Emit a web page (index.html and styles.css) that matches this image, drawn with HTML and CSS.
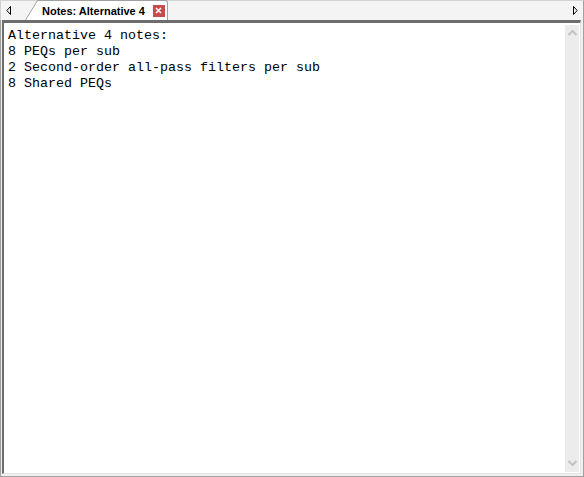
FILE: index.html
```html
<!DOCTYPE html>
<html>
<head>
<meta charset="utf-8">
<link rel="stylesheet" href="styles.css">
</head>
<body>
<div class="window">
  <div class="tabbar">
    <div class="nav nav-left">
      <svg width="6" height="9" viewBox="0 0 6 9"><path d="M4.5 0.5 L0.8 4.5 L4.5 8.5 Z" fill="none" stroke="#000" stroke-width="1"/></svg>
    </div>
    <div class="tab">
      <svg class="tab-slant" width="14" height="20" viewBox="0 0 14 20"><path d="M0 20 L12 1 L14 1 L14 20 Z" fill="#fff"/><path d="M0.5 20 L12.5 0.5 L14 0.5" fill="none" stroke="#a0a0a0" stroke-width="1"/></svg>
      <div class="tab-body">
        <span class="tab-title">Notes: Alternative 4</span>
        <span class="tab-close">
          <svg width="7" height="7" viewBox="0 0 7 7"><path d="M1 1 L6 6 M6 1 L1 6" stroke="#fff" stroke-width="1.6"/></svg>
        </span>
      </div>
    </div>
    <div class="spacer"></div>
    <div class="nav nav-right">
      <svg width="6" height="9" viewBox="0 0 6 9"><path d="M1.5 0.5 L5.2 4.5 L1.5 8.5 Z" fill="none" stroke="#000" stroke-width="1"/></svg>
    </div>
  </div>
  <div class="editor-frame">
    <div class="editor">
      <pre class="text">Alternative 4 notes:
8 PEQs per sub
2 Second-order all-pass filters per sub
8 Shared PEQs</pre>
      <div class="scrollbar">
        <svg width="9" height="6" viewBox="0 0 9 6"><path d="M0.5 5 L4.5 1 L8.5 5" fill="none" stroke="#c2c2c2" stroke-width="2"/></svg>
        <svg width="9" height="6" viewBox="0 0 9 6"><path d="M0.5 1 L4.5 5 L8.5 1" fill="none" stroke="#c2c2c2" stroke-width="2"/></svg>
      </div>
    </div>
  </div>
</div>
</body>
</html>
```

FILE: styles.css
```css
html, body {
  margin: 0;
  padding: 0;
  background: #f0f0f0;
}
.window {
  width: 584px;
  height: 477px;
  display: flex;
  flex-direction: column;
  box-sizing: border-box;
  background: #f0f0f0;
}
.tabbar {
  height: 20px;
  display: flex;
  align-items: stretch;
  background: #f4f4f4;
  border-top: 1px solid #d4d4d4;
  box-sizing: border-box;
  border-left: 1px solid #d0d0d0;
  border-right: 1px solid #a0a0a0;
}
.nav {
  width: 20px;
  display: flex;
  align-items: center;
  justify-content: center;
}
.nav-left { width: 16px; justify-content: flex-start; padding-left: 5px; box-sizing: border-box; }
.nav-right { width: 16px; }
.tab {
  display: flex;
  align-items: stretch;
  margin-left: 8px;
  margin-top: -1px;
}
.tab-slant { display: block; }
.tab-body {
  display: flex;
  align-items: center;
  background: #fff;
  border-top: 1px solid #a0a0a0;
  border-right: 1px solid #a0a0a0;
  border-radius: 0 3px 0 0;
  padding: 0 2px 0 3px;
  gap: 8px;
}
.tab-title {
  font-family: "Liberation Sans", Arial, sans-serif;
  font-weight: bold;
  font-size: 11px;
  color: #000;
}
.tab-close {
  width: 12px;
  height: 12px;
  background: #c44c4c;
  display: flex;
  align-items: center;
  justify-content: center;
}
.spacer { flex: 1; }
.editor-frame {
  flex: 1;
  display: flex;
  border-left: 1px solid #a0a0a0;
  border-right: 1px solid #a0a0a0;
  border-bottom: 1px solid #a0a0a0;
  padding: 0 2px 2px 1px;
  background: #f0f0f0;
}
.editor {
  flex: 1;
  display: flex;
  background: #fff;
  border-top: 3px solid #6d6d6d;
  border-left: 2px solid #6d6d6d;
  border-bottom: 1px solid #e3e3e3;
  border-right: 1px solid #e3e3e3;
}
.text {
  flex: 1;
  margin: 0;
  padding: 5px 0 0 4px;
  font-family: "Liberation Mono", "Courier New", monospace;
  font-size: 13.33px;
  line-height: 16px;
  color: #000;
}
.scrollbar {
  width: 14px;
  margin: 2px 1px 1px 0;
  background: #ececec;
  display: flex;
  flex-direction: column;
  justify-content: space-between;
  align-items: center;
  padding: 5px 0 6px;
}
```
